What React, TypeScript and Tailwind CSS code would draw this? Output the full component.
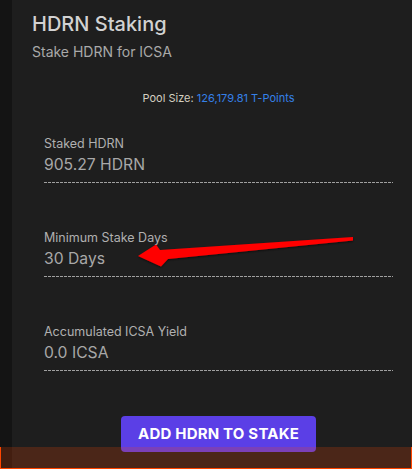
import React from "react";

const font = { fontFamily: "Inter, 'Noto Sans', sans-serif" };

function Stat({ label, value, first }: { label: string; value: string; first?: boolean }) {
  return (
    <div className={first ? "mt-[29px]" : "mt-[46px]"}>
      <div className="text-[12.5px] leading-[18px] text-[#b0b0b0] pl-3">{label}</div>
      <div className="text-[15.7px] leading-[24px] text-[#a8a8a8] pl-3">{value}</div>
      <div className="ml-3 mt-[5px] h-px w-[349px] bg-[repeating-linear-gradient(to_right,#a0a0a0_0px,#a0a0a0_3px,transparent_3px,transparent_4px)]" />
    </div>
  );
}

export default function App() {
  return (
    <div className="relative w-[412px] h-[469px] overflow-hidden bg-[#1e1e1e] flex" style={font}>
      <div className="w-3 shrink-0 bg-[#141414]" />
      <div className="flex-1 pl-5 pt-[10px]">
        <div className="text-[20px] leading-[28px] font-medium text-[#d2d2d2]">HDRN Staking</div>
        <div className="mt-1 text-[14px] leading-[20px] text-[#a9a9a9]">Stake HDRN for ICSA</div>
        <div className="w-[373px]">
          <div className="mt-[28px] text-center text-[11px] leading-[16px]">
            <span className="text-[#d4cfc0]">Pool Size: </span>
            <span className="text-[#3580e8]">126,179.81 T-Points</span>
          </div>
          <Stat first label="Staked HDRN" value="905.27 HDRN" />
          <Stat label="Minimum Stake Days" value="30 Days" />
          <Stat label="Accumulated ICSA Yield" value="0.0 ICSA" />
          <div className="mt-[45px] flex justify-center">
            <button className="h-9 w-[195px] rounded bg-[#5b3fe6] text-white text-[15px] font-bold tracking-[0.2px]">
              ADD HDRN TO STAKE
            </button>
          </div>
        </div>
      </div>

      <svg className="absolute left-0 top-0 pointer-events-none" width="412" height="469">
        <defs>
          <filter id="sh" x="-10%" y="-50%" width="120%" height="200%">
            <feDropShadow dx="0" dy="1" stdDeviation="1" floodColor="#000" floodOpacity="0.6" />
          </filter>
        </defs>
        <polygon
          filter="url(#sh)"
          fill="#ff0000"
          points="353,237 353,240.5 168,259 161,266.5 138,256 156,244.5 160,250"
        />
      </svg>

      <div className="absolute left-0 right-0 bottom-0 h-[22px] bg-[#ff4500]/20 border border-t-0 border-[#ff4500]" />
    </div>
  );
}
